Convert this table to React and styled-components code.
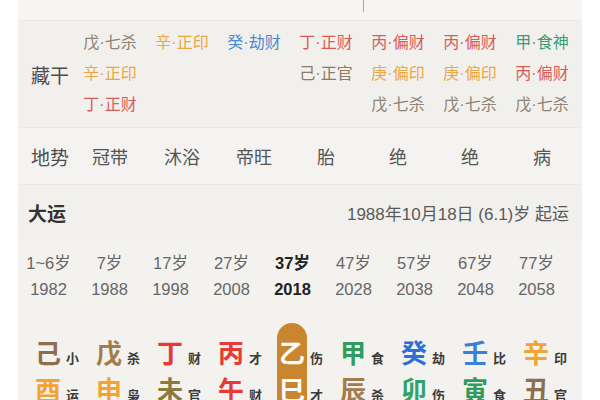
import React from "react";
import styled, { createGlobalStyle } from "styled-components";

const Global = createGlobalStyle`
  html, body { margin: 0; padding: 0; background: #ffffff; }
  body { font-family: "Liberation Sans", "Noto Sans CJK SC", sans-serif; }
  * { box-sizing: border-box; }
`;

const C = {
  gray: "#8f8371",
  orange: "#eaa743",
  red: "#d95c58",
  blue: "#4a8bd0",
  green: "#3d9c77",
  brown: "#8a7b63",
};

const Card = styled.div`
  margin-left: 18px;
  width: 564px;
  background: #f3f2ef;
  overflow: hidden;
  height: 400px;
`;

const TopStrip = styled.div`
  height: 21px;
  background: #f6f5f3;
  border-bottom: 1px solid #ebe9e5;
  display: flex;
  padding-left: 345px;
`;

const VLine = styled.div`
  width: 1px;
  height: 12px;
  background: #a9a7a3;
`;

const Section = styled.div`
  display: grid;
  grid-template-columns: 56px repeat(7, 72px);
  align-items: center;
  background: ${(p) => p.$bg || "#f2f1ee"};
  border-bottom: 1px solid #ebe9e5;
  height: ${(p) => p.$h}px;
`;

const RowLabel = styled.div`
  padding-left: 13px;
  font-size: 19px;
  color: #4d4d4d;
  white-space: nowrap;
`;

const HiddenCol = styled.div`
  align-self: start;
  padding-top: 6px;
  display: flex;
  flex-direction: column;
  align-items: center;
`;

const Hidden = styled.div`
  height: 31px;
  line-height: 31px;
  font-size: 16px;
  color: ${(p) => p.$c};
  white-space: nowrap;
`;

const Terrain = styled.div`
  text-align: center;
  font-size: 18px;
  color: #555;
`;

const LuckHeader = styled.div`
  height: 55px;
  display: flex;
  align-items: center;
  justify-content: space-between;
  padding: 0 13px 0 10px;
  background: #f1f0ed;
`;

const LuckTitle = styled.div`
  font-size: 19px;
  font-weight: 700;
  color: #333;
`;

const LuckStart = styled.div`
  font-size: 17px;
  color: #5a5a5a;
`;

const LuckGrid = styled.div`
  display: grid;
  grid-template-columns: repeat(9, 61px);
  padding: 10px 0 8px;
  background: #f3f2ef;
`;

const LuckCell = styled.div`
  display: flex;
  flex-direction: column;
  align-items: center;
  font-size: 16.5px;
  line-height: 26px;
  color: ${(p) => (p.$cur ? "#222" : "#666")};
  font-weight: ${(p) => (p.$cur ? 700 : 400)};
  white-space: nowrap;
`;

const PillarGrid = styled.div`
  display: grid;
  grid-template-columns: repeat(9, 61px);
  padding-top: 13px;
`;

const Pillar = styled.div`
  display: flex;
  padding-left: 15px;
`;

const CharCol = styled.div`
  width: 31px;
  display: flex;
  flex-direction: column;
  align-items: center;
  padding-top: 10px;
  background: ${(p) => (p.$on ? "#c9862f" : "transparent")};
  border-radius: 16px 16px 0 0;
  height: 120px;
`;

const Big = styled.div`
  height: 37px;
  line-height: 37px;
  font-size: 26px;
  font-weight: 700;
  font-family: "Noto Sans CJK SC", sans-serif;
  color: ${(p) => p.$c};
`;

const LabelCol = styled.div`
  display: flex;
  flex-direction: column;
  padding-top: 10px;
  margin-left: 3px;
`;

const Small = styled.div`
  height: 37px;
  line-height: 37px;
  padding-top: 6px;
  font-size: 13px;
  font-weight: 700;
  font-family: "Noto Sans CJK SC", sans-serif;
  color: #3b3b3b;
  white-space: nowrap;
`;

const hidden = [
  [["戊·七杀", C.gray], ["辛·正印", C.orange], ["丁·正财", C.red]],
  [["辛·正印", C.orange]],
  [["癸·劫财", C.blue]],
  [["丁·正财", C.red], ["己·正官", C.brown]],
  [["丙·偏财", C.red], ["庚·偏印", C.orange], ["戊·七杀", C.gray]],
  [["丙·偏财", C.red], ["庚·偏印", C.orange], ["戊·七杀", C.gray]],
  [["甲·食神", C.green], ["丙·偏财", C.red], ["戊·七杀", C.gray]],
];

const terrain = ["冠带", "沐浴", "帝旺", "胎", "绝", "绝", "病"];

const luck = [
  ["1~6岁", "1982"],
  ["7岁", "1988"],
  ["17岁", "1998"],
  ["27岁", "2008"],
  ["37岁", "2018", true],
  ["47岁", "2028"],
  ["57岁", "2038"],
  ["67岁", "2048"],
  ["77岁", "2058"],
];

const P = {
  brown: "#8c6f4e",
  tan: "#a07d4b",
  olive: "#8d7a3e",
  red: "#e53b36",
  green: "#2f9b5d",
  green2: "#2ea36c",
  blue: "#2f6fd4",
  blue2: "#3a80d9",
  orange: "#f2a431",
  white: "#ffffff",
};

const pillars = [
  { s: ["己", P.brown, "小"], b: ["酉", P.orange, "运"] },
  { s: ["戊", P.tan, "杀"], b: ["申", P.orange, "枭"] },
  { s: ["丁", P.red, "财"], b: ["未", P.olive, "官"] },
  { s: ["丙", P.red, "才"], b: ["午", P.red, "财"] },
  { s: ["乙", P.white, "伤"], b: ["巳", P.white, "才"], on: true },
  { s: ["甲", P.green, "食"], b: ["辰", P.tan, "杀"] },
  { s: ["癸", P.blue, "劫"], b: ["卯", P.green2, "伤"] },
  { s: ["壬", P.blue2, "比"], b: ["寅", P.green, "食"] },
  { s: ["辛", P.orange, "印"], b: ["丑", P.brown, "官"] },
];

export default function App() {
  return (
    <>
      <Global />
      <Card>
        <TopStrip>
          <VLine />
        </TopStrip>
        <Section $h={107} $bg="#f2f0ed">
          <RowLabel>藏干</RowLabel>
          {hidden.map((col, i) => (
            <HiddenCol key={i}>
              {col.map(([t, c], j) => (
                <Hidden key={j} $c={c}>
                  {t}
                </Hidden>
              ))}
            </HiddenCol>
          ))}
        </Section>
        <Section $h={57} $bg="#f4f3f1">
          <RowLabel>地势</RowLabel>
          {terrain.map((t, i) => (
            <Terrain key={i}>{t}</Terrain>
          ))}
        </Section>
        <LuckHeader>
          <LuckTitle>大运</LuckTitle>
          <LuckStart>1988年10月18日 (6.1)岁 起运</LuckStart>
        </LuckHeader>
        <LuckGrid>
          {luck.map(([a, y, cur], i) => (
            <LuckCell key={i} $cur={cur}>
              <span>{a}</span>
              <span>{y}</span>
            </LuckCell>
          ))}
        </LuckGrid>
        <PillarGrid>
          {pillars.map((p, i) => (
            <Pillar key={i}>
              <CharCol $on={p.on}>
                <Big $c={p.s[1]}>{p.s[0]}</Big>
                <Big $c={p.b[1]}>{p.b[0]}</Big>
              </CharCol>
              <LabelCol>
                <Small>{p.s[2]}</Small>
                <Small>{p.b[2]}</Small>
              </LabelCol>
            </Pillar>
          ))}
        </PillarGrid>
      </Card>
    </>
  );
}
